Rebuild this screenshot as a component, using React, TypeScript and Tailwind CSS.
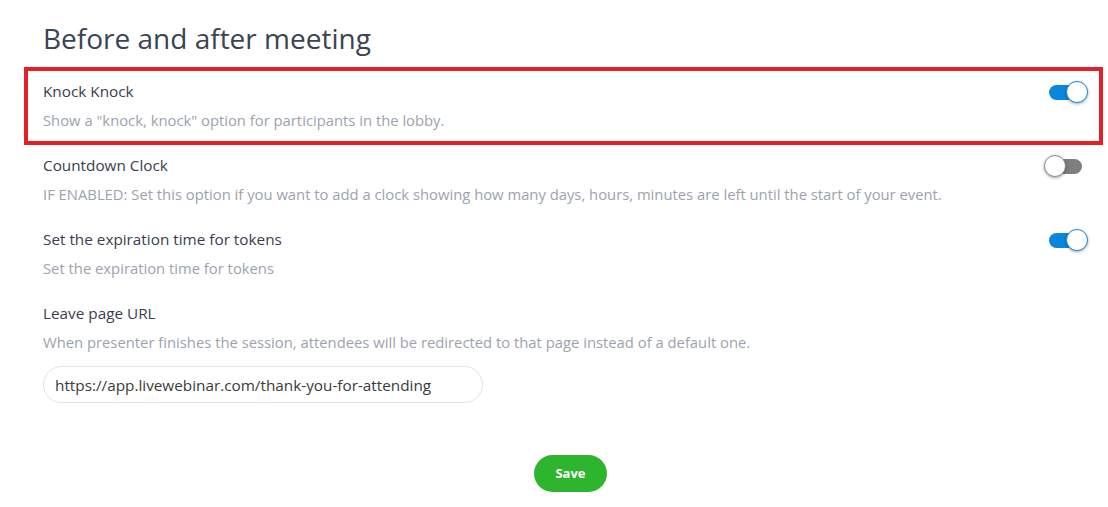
import React, { useState } from "react";

type Setting = {
  id: string;
  label: string;
  description: string;
  enabled?: boolean;
  highlighted?: boolean;
};

const settings: Setting[] = [
  {
    id: "knock",
    label: "Knock Knock",
    description: 'Show a "knock, knock" option for participants in the lobby.',
    enabled: true,
    highlighted: true,
  },
  {
    id: "countdown",
    label: "Countdown Clock",
    description:
      "IF ENABLED: Set this option if you want to add a clock showing how many days, hours, minutes are left until the start of your event.",
    enabled: false,
  },
  {
    id: "tokens",
    label: "Set the expiration time for tokens",
    description: "Set the expiration time for tokens",
    enabled: true,
  },
];

const Toggle = ({ on, onChange }: { on: boolean; onChange: () => void }) => (
  <button
    onClick={onChange}
    className="relative flex h-[24px] w-[44px] shrink-0 items-center"
  >
    <span
      className={`absolute left-[5px] h-[15px] w-[33px] rounded-full ${
        on ? "bg-[#0b86dc]" : "bg-[#7f7f7f]"
      }`}
    />
    <span
      className={`absolute top-[1px] h-[22px] w-[22px] rounded-full bg-white shadow-[0_1px_3px_rgba(0,0,0,0.35)] ${
        on ? "left-[22px] border border-[#1a8ae0]" : "left-0 border border-[#8a8a8a]"
      }`}
    />
  </button>
);

export default function App() {
  const [values, setValues] = useState<Record<string, boolean>>(
    Object.fromEntries(settings.map((s) => [s.id, !!s.enabled]))
  );
  const [url, setUrl] = useState("https://app.livewebinar.com/thank-you-for-attending");

  return (
    <div
      className="min-h-screen bg-white px-[24px] pr-[5px]"
      style={{ fontFamily: '"Open Sans", "Liberation Sans", sans-serif' }}
    >
      <h1 className="ml-[19px] pt-[19px] text-[28px] leading-[38px] text-[#3c4352]">
        Before and after meeting
      </h1>

      <div className="mt-[10px]">
        {settings.map((s) => (
          <div
            key={s.id}
            className={`flex items-start justify-between border-[4px] pl-[15px] pr-[11px] pt-[9px] ${
              s.highlighted
                ? "relative mb-[-4px] border-[#e61e25] pb-[10px]"
                : "border-transparent pb-[6px]"
            }`}
          >
            <div>
              <div className="text-[15.3px] leading-[22px] text-[#3b3d4f]">{s.label}</div>
              <div className="mt-[7px] text-[14.8px] leading-[22px] text-[#9ca3ae]">
                {s.description}
              </div>
            </div>
            <Toggle
              on={values[s.id]}
              onChange={() => setValues((v) => ({ ...v, [s.id]: !v[s.id] }))}
            />
          </div>
        ))}

        <div className="border-[4px] border-transparent pl-[15px] pt-[9px]">
          <div className="text-[15.3px] leading-[22px] text-[#3b3d4f]">Leave page URL</div>
          <div className="mt-[7px] text-[14.8px] leading-[22px] text-[#9ca3ae]">
            When presenter finishes the session, attendees will be redirected to that page
            instead of a default one.
          </div>
          <input
            value={url}
            onChange={(e) => setUrl(e.target.value)}
            className="mt-[13px] h-[37px] w-[440px] rounded-full border border-[#e2e2e2] px-[11px] text-[15.3px] text-[#3a3a3a] outline-none"
          />
        </div>
      </div>

      <div className="mt-[48px] pl-[510px]">
        <button className="h-[37px] w-[73px] rounded-full bg-[#2db52d] text-[13px] font-bold text-white">
          Save
        </button>
      </div>
    </div>
  );
}
